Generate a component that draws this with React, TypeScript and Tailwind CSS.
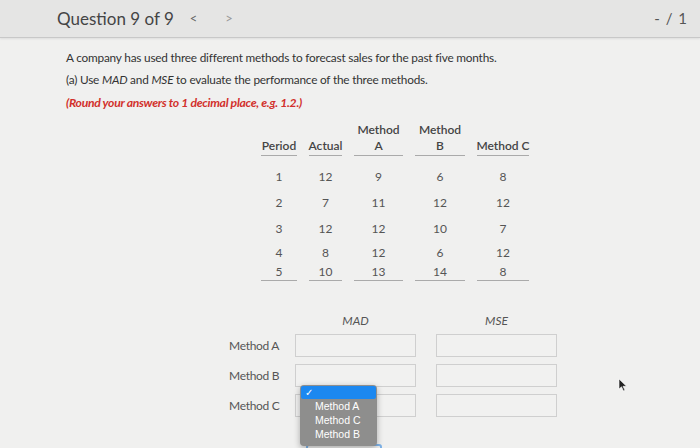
import React from "react";

const cols = [
  { w: "w-[36px]", head: ["Period"], data: ["1", "2", "3", "4", "5"] },
  { w: "w-[33px]", head: ["Actual"], data: ["12", "7", "12", "8", "10"] },
  { w: "w-[49px]", head: ["Method", "A"], data: ["9", "11", "12", "12", "13"] },
  { w: "w-[50px]", head: ["Method", "B"], data: ["6", "12", "10", "6", "14"] },
  { w: "w-[52px]", head: ["Method C"], data: ["8", "12", "7", "12", "8"] },
];

const rowH = ["h-[26px]", "h-[26px]", "h-[26px]", "h-[21px]", "h-[17px]"];

export default function App() {
  return (
    <div
      className="relative w-[700px] h-[448px] overflow-hidden bg-[#f0f0ef] text-[#3a3a3a]"
      style={{ fontFamily: "Lato, 'Open Sans', sans-serif" }}
    >
      {/* Header */}
      <div className="h-[38px] bg-[#e5e5e4] border-b border-[#c8c8c8] flex items-center pl-[57px] pr-[12px] shadow-[0_1px_2px_rgba(0,0,0,0.08)]">
        <span className="text-[17px] text-[#444] leading-none">Question 9 of 9</span>
        <span className="ml-[16px] text-[13px] text-[#666]">&lt;</span>
        <span className="ml-[28px] text-[13px] text-[#999]">&gt;</span>
        <span className="ml-auto text-[15px] text-[#555] tracking-[1px]">- / 1</span>
      </div>

      {/* Body */}
      <div className="pl-[66px] pt-[12px]">
        <p className="text-[11.8px] leading-[16px] text-[#333] tracking-[-0.2px]">
          A company has used three different methods to forecast sales for the past five months.
        </p>
        <p className="mt-[6px] text-[11.8px] leading-[16px] text-[#333] tracking-[-0.2px]">
          (a) Use <i>MAD</i> and <i>MSE</i> to evaluate the performance of the three methods.
        </p>
        <p className="mt-[7px] text-[12.2px] leading-[16px] text-[#d2302c] font-bold italic tracking-[-0.3px]">
          (Round your answers to 1 decimal place, e.g. 1.2.)
        </p>
      </div>

      {/* Data table */}
      <div className="mt-[1px] ml-[261px] flex gap-[12px]">
        {cols.map((c, i) => (
          <div key={i} className={`${c.w} flex flex-col`}>
            <div className="h-[44px] flex flex-col justify-end items-center border-b border-[#aaa] pb-[1px] text-[12px] leading-[16px] font-semibold text-[#444]">
              {c.head.map((h, j) => (
                <span key={j} className="whitespace-nowrap">{h}</span>
              ))}
            </div>
            <div className="h-[8px]" />
            {c.data.map((d, j) => (
              <div
                key={j}
                className={`${rowH[j]} flex items-center justify-center text-[12px] text-[#555]`}
              >
                {d}
              </div>
            ))}
            <div className="border-b border-[#aaa]" />
          </div>
        ))}
      </div>

      {/* Answers */}
      <div className="mt-[32px] ml-[229px]">
        <div className="flex text-[12px] italic text-[#555] h-[16px] items-center">
          <div className="w-[66px]" />
          <div className="w-[121px] text-center">MAD</div>
          <div className="w-[20px]" />
          <div className="w-[121px] text-center">MSE</div>
        </div>
        <div className="mt-[5px] flex flex-col gap-[7px]">
          {["Method A", "Method B", "Method C"].map((m) => (
            <div key={m} className="flex items-center">
              <div className="w-[66px] text-[12px] text-[#555] tracking-[-0.3px]">{m}</div>
              <div className="w-[121px] h-[23px] border border-[#cfcfcf] bg-[#f1f1f0]" />
              <div className="w-[20px]" />
              <div className="w-[121px] h-[23px] border border-[#cfcfcf] bg-[#f1f1f0]" />
            </div>
          ))}
        </div>
        <div className="mt-[27px] ml-[77px] w-[76px] h-[20px] rounded-[3px] border-2 border-[#7fb3e8]" />
      </div>

      {/* Dropdown menu */}
      <div className="absolute left-[300px] top-[385px] w-[77px] h-[61px] rounded-[4px] bg-[#8e8e8d] shadow-[0_2px_6px_rgba(0,0,0,0.3)] overflow-hidden py-[1px]"
        style={{ fontFamily: "'Liberation Sans', Arial, sans-serif" }}
      >
        <div className="h-[13px] mx-[1px] bg-[#1c88f0] rounded-[2px] flex items-center pl-[4px] text-white text-[10px] leading-none">
          ✓
        </div>
        <div className="pl-[15px] text-[10.5px] leading-[14px] text-white">Method A</div>
        <div className="pl-[15px] text-[10.5px] leading-[14px] text-white">Method C</div>
        <div className="pl-[15px] text-[10.5px] leading-[14px] text-white">Method B</div>
      </div>

      {/* Mouse cursor */}
      <svg className="absolute left-[618px] top-[378px]" width="10" height="14" viewBox="0 0 10 14">
        <path d="M1 1 L1 11 L3.5 8.8 L5.5 13 L7 12.3 L5 8.3 L8.5 8.3 Z" fill="#222" stroke="#fff" strokeWidth="0.6" />
      </svg>
    </div>
  );
}
